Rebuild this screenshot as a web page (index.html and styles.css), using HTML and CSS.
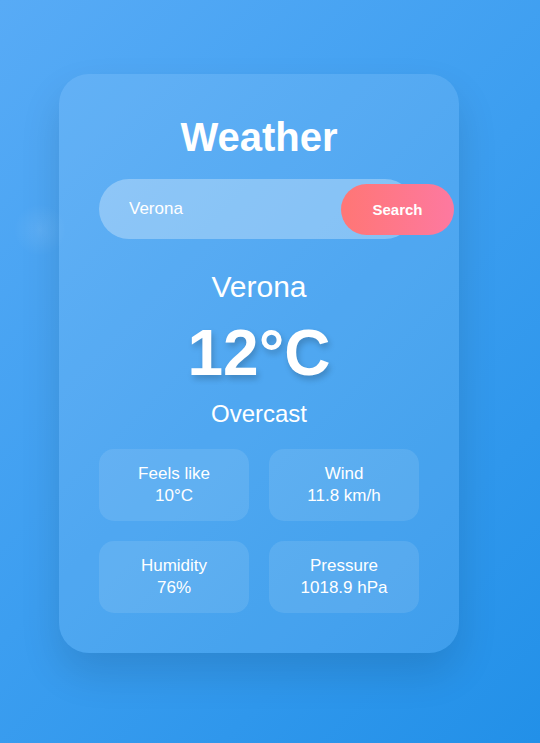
FILE: index.html
```html
<!DOCTYPE html>
<html lang="en">
<head>
<meta charset="utf-8">
<title>Weather</title>
<link rel="stylesheet" href="styles.css">
</head>
<body>
<main class="card">
  <h1 class="title">Weather</h1>
  <form class="search" onsubmit="return false">
    <input class="search-input" type="text" value="Verona">
    <button class="search-btn" type="submit">Search</button>
  </form>
  <div class="city">Verona</div>
  <div class="temp">12°C</div>
  <div class="desc">Overcast</div>
  <div class="details">
    <div class="detail"><span>Feels like</span><span>10°C</span></div>
    <div class="detail"><span>Wind</span><span>11.8 km/h</span></div>
    <div class="detail"><span>Humidity</span><span>76%</span></div>
    <div class="detail"><span>Pressure</span><span>1018.9 hPa</span></div>
  </div>
</main>
</body>
</html>
```
FILE: styles.css
```css
html, body {
  margin: 0;
  height: 100%;
}
body {
  box-sizing: border-box;
  padding: 74px 0 0 59px;
  font-family: "Liberation Sans", Arial, sans-serif;
  color: #fff;
  background:
    radial-gradient(circle at 40px 230px, rgba(255,255,255,0.09), rgba(255,255,255,0) 26px),
    linear-gradient(135deg, #58abf6 0%, #3c9ef0 50%, #2290e8 100%);
  overflow: hidden;
}
.card {
  box-sizing: border-box;
  width: 400px;
  padding: 40px;
  border-radius: 30px;
  background: rgba(255,255,255,0.1);
  box-shadow: 0 20px 40px rgba(0,0,0,0.12);
  text-align: center;
}
.title {
  margin: 0 0 19px;
  font-size: 40px;
  line-height: 46px;
  font-weight: bold;
}
.search {
  position: relative;
  height: 60px;
  margin: 0 0 31px;
}
.search-input {
  box-sizing: border-box;
  display: block;
  width: 316px;
  height: 60px;
  padding: 0 30px;
  border: none;
  outline: none;
  border-radius: 30px;
  background: rgba(255,255,255,0.3);
  color: #fff;
  font-family: inherit;
  font-size: 17px;
}
.search-btn {
  position: absolute;
  left: 242px;
  top: 5px;
  width: 113px;
  height: 51px;
  border: none;
  border-radius: 26px;
  background: linear-gradient(90deg, #ff7675, #fd79a0);
  color: #fff;
  font-family: inherit;
  font-size: 15px;
  font-weight: bold;
  cursor: pointer;
}
.city {
  font-size: 30px;
  line-height: 34px;
  margin-bottom: 12px;
}
.temp {
  font-size: 64px;
  line-height: 74px;
  font-weight: bold;
  text-shadow: 2px 4px 6px rgba(0,0,0,0.2);
  margin-bottom: 10px;
}
.desc {
  font-size: 24px;
  line-height: 28px;
  margin-bottom: 21px;
}
.details {
  display: grid;
  grid-template-columns: 150px 150px;
  gap: 20px;
}
.detail {
  display: flex;
  flex-direction: column;
  justify-content: center;
  height: 72px;
  border-radius: 15px;
  background: rgba(255,255,255,0.1);
  font-size: 17px;
  line-height: 22px;
}
```
